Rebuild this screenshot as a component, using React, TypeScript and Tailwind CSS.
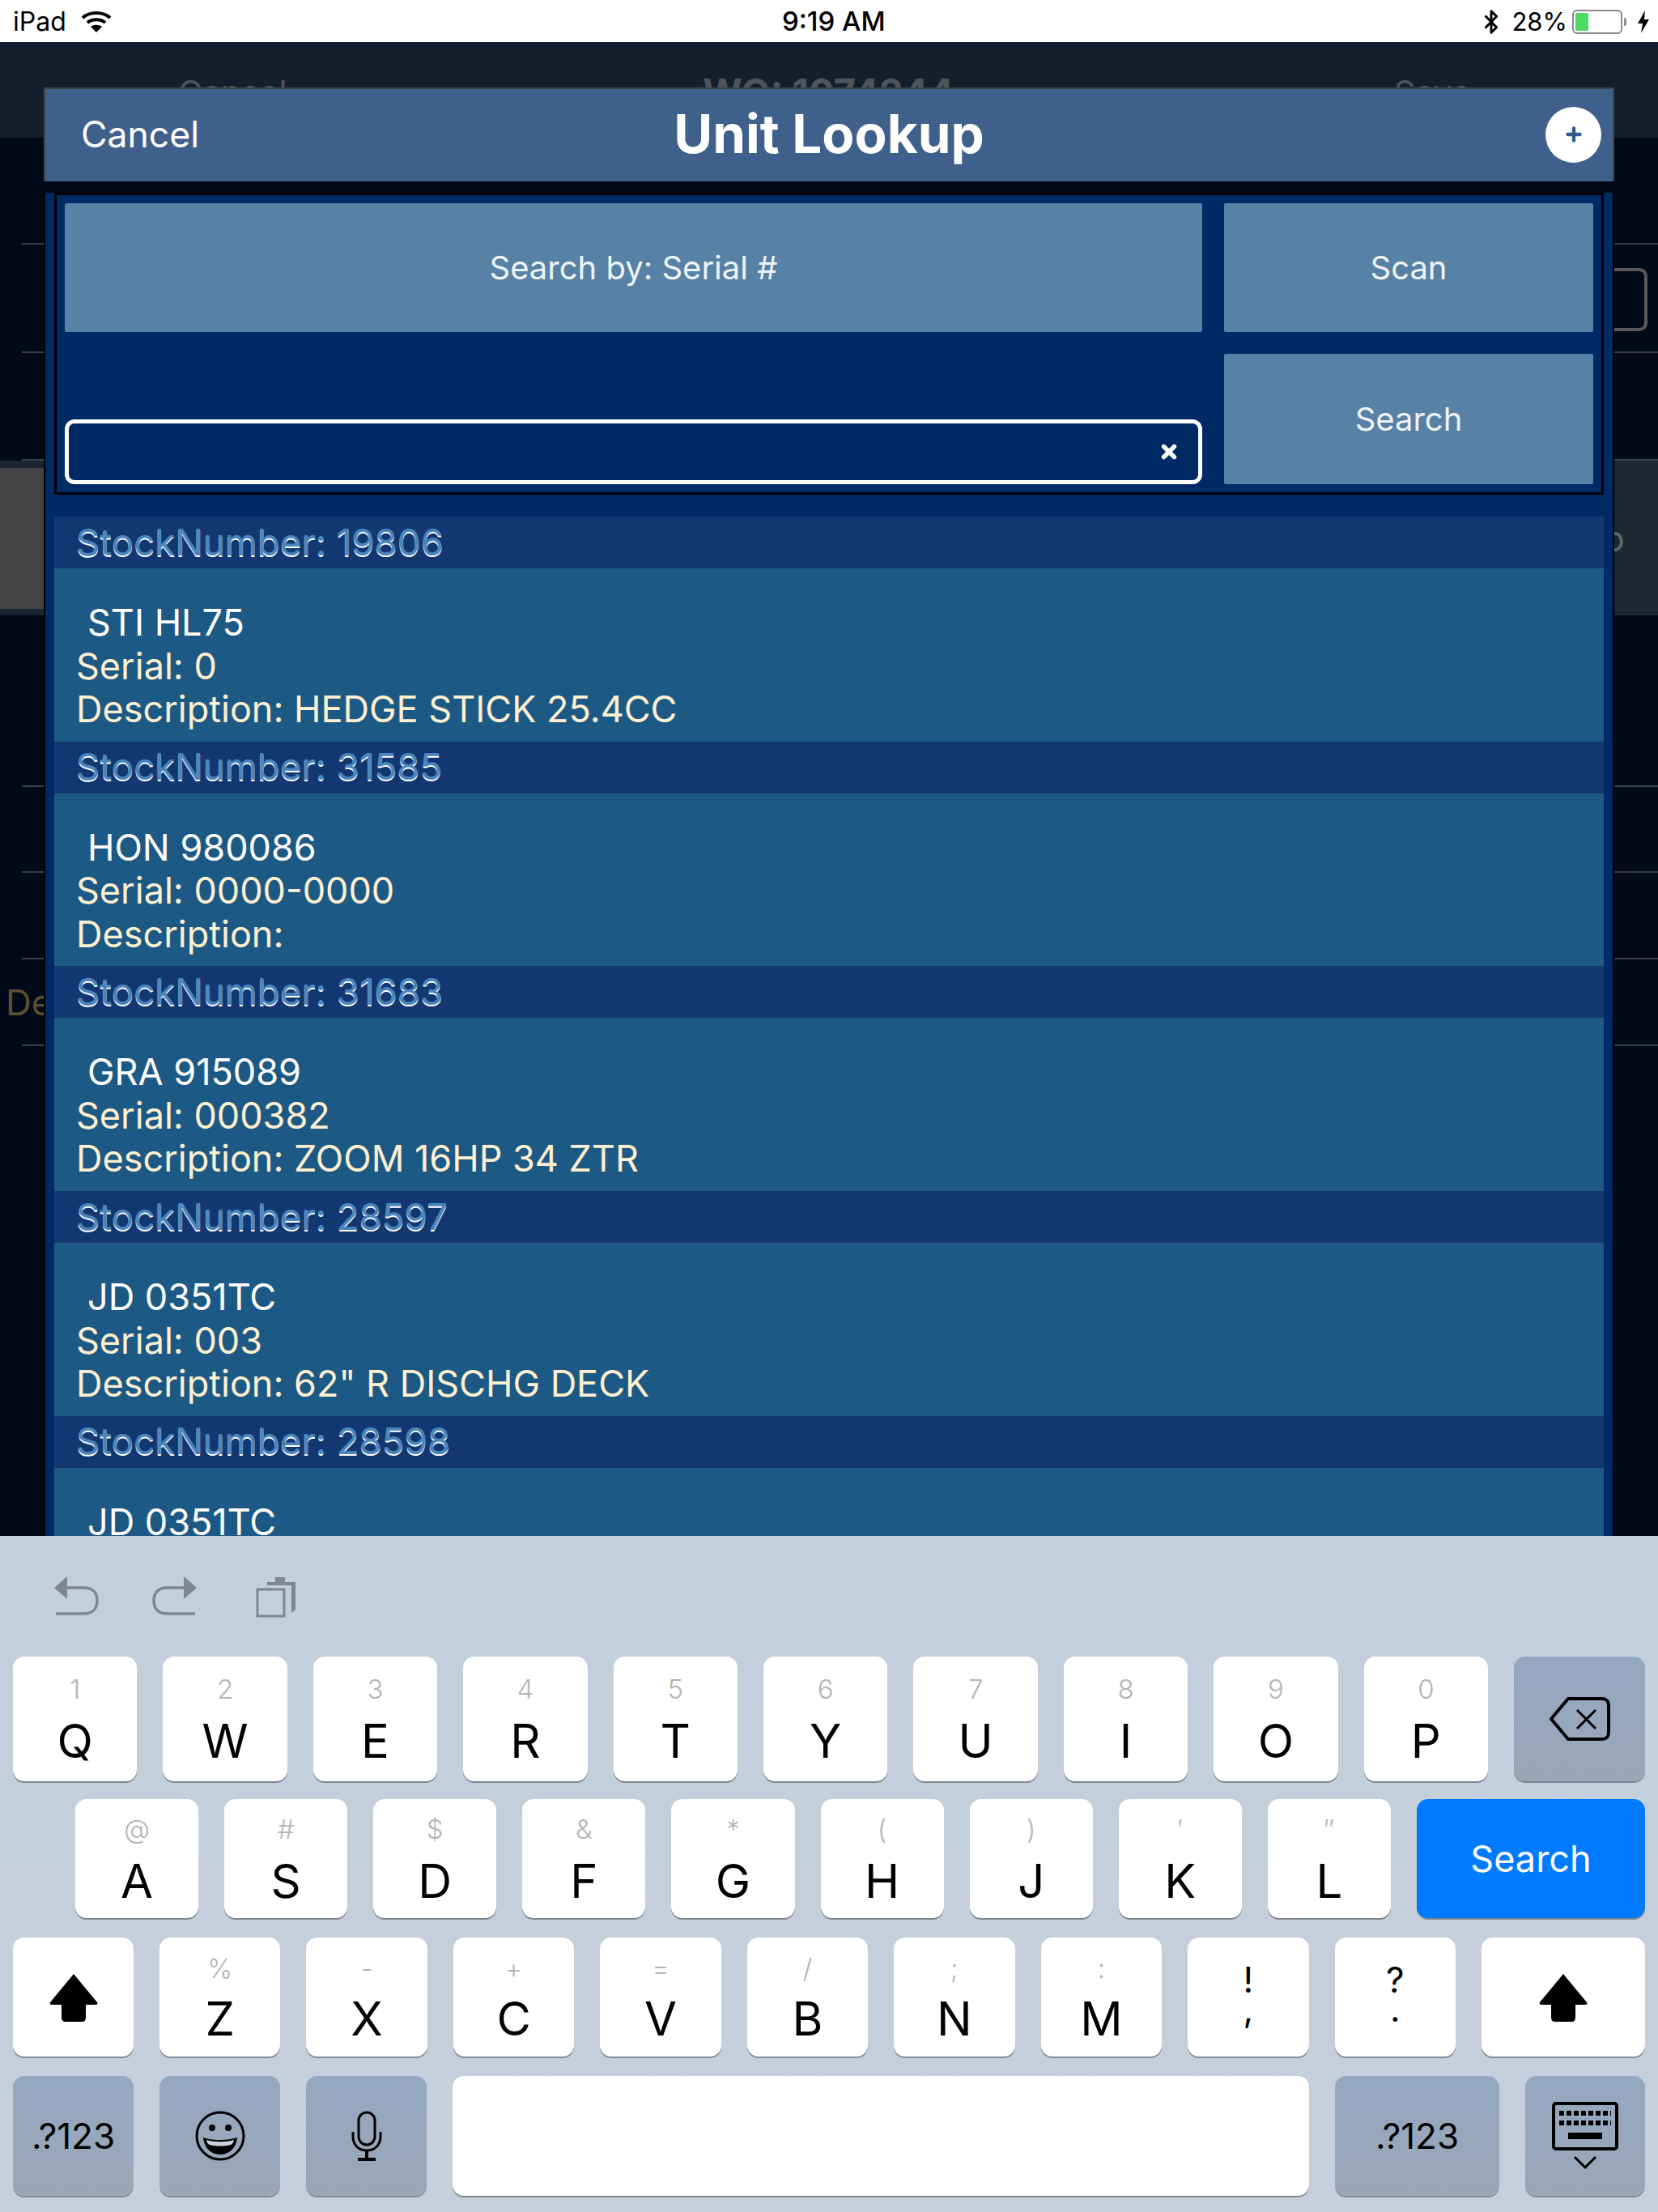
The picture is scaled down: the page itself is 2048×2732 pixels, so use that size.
import { Bluetooth, Plus, X } from "lucide-react";

const rows = [
  { stock: "19806", name: "STI HL75", serial: "0", desc: "HEDGE STICK 25.4CC" },
  { stock: "31585", name: "HON 980086", serial: "0000-0000", desc: "" },
  { stock: "31683", name: "GRA 915089", serial: "000382", desc: "ZOOM 16HP 34 ZTR" },
  { stock: "28597", name: "JD 0351TC", serial: "003", desc: '62" R DISCHG DECK' },
  { stock: "28598", name: "JD 0351TC", serial: "", desc: "" },
];

const Wifi = () => (
  <svg width="38" height="28" viewBox="0 0 38 28" fill="none" stroke="#000" strokeWidth="4">
    <path d="M2 9C11 1 27 1 36 9" />
    <path d="M8 15C14 10 24 10 30 15" />
    <path d="M19 27L12 20C16 17 22 17 26 20Z" fill="#000" stroke="none" />
  </svg>
);

const StatusBar = () => (
  <div className="relative flex h-[52px] items-center justify-between bg-white pl-[16px] pr-[10px] pt-[2px] text-[31px] text-black">
    <div className="flex items-center gap-[18px]">
      <span className="text-[32px]">iPad</span>
      <Wifi />
    </div>
    <span className="absolute left-[966px] text-[33px] font-medium">9:19 AM</span>
    <div className="flex items-center">
      <Bluetooth size={32} strokeWidth={2.2} />
      <span className="ml-[9px]">28%</span>
      <div className="ml-[6px] flex h-[30px] w-[62px] items-center rounded-[6px] border-2 border-[#8a8a8a] p-[2px]">
        <div className="h-full w-[16px] rounded-[2px] bg-[#4cd964]" />
      </div>
      <div className="ml-[2px] h-[10px] w-[3px] rounded-r bg-[#8a8a8a]" />
      <svg width="16" height="28" viewBox="0 0 16 28" fill="#000" className="ml-[13px]">
        <path d="M10 0L1 16H7L5 28L15 11H9Z" />
      </svg>
    </div>
  </div>
);

// the work order page that sits dimmed behind the lookup
const BackPage = () => (
  <div>
    <div className="flex h-[118px] items-start bg-[#141e2d] pl-[220px] pt-[36px] leading-[52px] text-[#4f545c]">
      <span className="w-[648px] text-[41px]">Cancel</span>
      <span className="w-[854px] text-[47px] font-bold">WO: 1074244</span>
      <span className="text-[41px]">Save</span>
    </div>
    <div className="ml-[27px] h-[132px] border-b-2 border-[#3b3f46]" />
    <div className="ml-[27px] flex h-[134px] justify-end border-b-2 border-[#3b3f46] pr-[13px] pt-[29px]">
      <div className="h-[78px] w-[200px] rounded-[10px] border-4 border-[#5a5a5a]" />
    </div>
    <div className="ml-[27px] h-[133px] border-b-2 border-[#3b3f46]" />
    <div className="flex h-[191px]">
      <div className="flex w-1/2 flex-col">
        <div className="h-[9px] bg-[#1a2531]" />
        <div className="flex-1 bg-[#444444]" />
        <div className="h-[8px] bg-[#1a2531]" />
      </div>
      <div className="flex w-1/2 items-center justify-end bg-[#1c2731] pr-[41px] text-[44px] text-[#62666a]">o</div>
    </div>
    <div className="ml-[27px] h-[212px] border-b-2 border-[#3b3f46]" />
    <div className="ml-[27px] h-[106px] border-b-2 border-[#3b3f46]" />
    <div className="ml-[27px] h-[107px] border-b-2 border-[#3b3f46]" />
    <div className="ml-[27px] flex h-[107px] items-center border-b-2 border-[#3b3f46] text-[44px] text-[#5e4f2d]">
      <span className="-ml-[20px]">Description</span>
    </div>
  </div>
);

const Header = () => (
  <div className="relative flex h-[116px] items-center justify-center border-l-2 border-r-2 border-t-2 border-[#444] bg-[#40608c] pb-[2px]">
    <span className="absolute left-[44px] text-[44.5px] text-white">Cancel</span>
    <span className="text-[65.5px] font-bold text-white">Unit Lookup</span>
    <div className="absolute right-[14px] flex h-[69px] w-[69px] items-center justify-center rounded-full bg-white">
      <Plus size={26} strokeWidth={4} className="text-[#2e5a8e]" />
    </div>
  </div>
);

const PanelButton = ({ label, className }: { label: string; className: string }) => (
  <div className={`flex items-center justify-center rounded-[2px] bg-[#5781a5] text-[40px] text-[#eef3f7] ${className}`}>
    {label}
  </div>
);

const SearchPanel = () => (
  <div className="mx-[11px] mt-[14px] flex gap-[27px] border-[3px] border-black px-[10px] py-[10px]">
    <div className="flex w-[1405px] flex-col justify-between">
      <PanelButton label="Search by: Serial #" className="h-[159px]" />
      <div className="flex h-[80px] items-center justify-end rounded-[12px] border-[5px] border-white pr-[23px]">
        <X size={26} strokeWidth={5} className="text-white" />
      </div>
    </div>
    <div className="flex w-[456px] flex-col gap-[27px]">
      <PanelButton label="Scan" className="h-[159px]" />
      <PanelButton label="Search" className="h-[161px]" />
    </div>
  </div>
);

const UnitRow = ({ stock, name, serial, desc }: (typeof rows)[number]) => (
  <div>
    <div className="flex h-[64px] items-center bg-[#133871] pl-[27px] text-[45.7px] text-[#4a85bd] [text-shadow:0_2px_0_#ffffff]">
      StockNumber: {stock}
    </div>
    <div className="h-[213.7px] bg-[#1d5985] pl-[27px] pt-[40px] text-[45px] leading-[53.5px] text-[#fdf0d0]">
      <div className="pl-[14px] text-white">{name}</div>
      {serial && <div>Serial: {serial}</div>}
      {serial && <div>Description: {desc}</div>}
    </div>
  </div>
);

const Modal = () => (
  <div className="absolute left-[54px] top-[108px] h-[1790px] w-[1940px] overflow-hidden">
    <Header />
    <div className="h-full border-x-2 border-black bg-[#002a66]">
      <SearchPanel />
      <div className="mx-[11px] mt-[27px]">
        {rows.map((r) => (
          <UnitRow key={r.stock} {...r} />
        ))}
      </div>
    </div>
  </div>
);

const Undo = () => (
  <svg width="56" height="50" viewBox="0 0 56 50" fill="none" stroke="#7e8790" strokeWidth="3.5">
    <path d="M1 15L17 1V29Z" fill="#7e8790" stroke="none" />
    <path d="M16 15H38C48 15 54 21 54 31C54 41 48 47 38 47H3" />
  </svg>
);

const Redo = () => (
  <svg width="56" height="50" viewBox="0 0 56 50" fill="none" stroke="#7e8790" strokeWidth="3.5">
    <path d="M55 15L39 1V29Z" fill="#7e8790" stroke="none" />
    <path d="M40 15H18C8 15 2 21 2 31C2 41 8 47 18 47H53" />
  </svg>
);

const Paste = () => (
  <svg width="50" height="52" viewBox="0 0 50 52" fill="none" stroke="#7e8790" strokeWidth="3" className="ml-[6px]">
    <path d="M14 8H24V2H36V8H49V42L44 46V12H14Z" fill="#7e8790" stroke="none" />
    <rect x="2" y="17" width="33" height="33" />
  </svg>
);

const Key = ({ main, sub, top, gap }: { main: string; sub: string; top: string; gap: string }) => (
  <div className={`flex flex-1 flex-col items-center rounded-[14px] bg-white shadow-[0_2px_0_#7f8792] ${top}`}>
    <span className="h-[40px] text-[33px] font-light leading-[40px] text-[#b4b4b4]">{sub}</span>
    <span className={`text-[58px] font-normal leading-[64px] text-black ${gap}`}>{main}</span>
  </div>
);

const PunctKey = ({ a, b }: { a: string; b: string }) => (
  <div className="flex flex-1 flex-col items-center rounded-[14px] bg-white pt-[34px] text-[44px] leading-[36px] text-black shadow-[0_2px_0_#7f8792]">
    <span>{a}</span>
    <span>{b}</span>
  </div>
);

const ShiftKey = ({ className }: { className: string }) => (
  <div className={`flex items-center justify-center rounded-[14px] bg-white shadow-[0_2px_0_#7f8792] ${className}`}>
    <svg width="60" height="60" viewBox="0 0 60 60" fill="#000">
      <path d="M30 1L59 36C60 38 59 39 57 39H45V55C45 58 43 60 41 60H19C17 60 15 58 15 55V39H3C1 39 0 38 1 36Z" />
    </svg>
  </div>
);

const GrayKey = ({ className, children }: { className: string; children: React.ReactNode }) => (
  <div className={`flex items-center justify-center rounded-[14px] bg-linear-to-b from-[#94a8c1] to-[#9aa6b6] shadow-[0_2px_0_#7f8792] ${className}`}>
    {children}
  </div>
);

const Emoji = () => (
  <svg width="62" height="62" viewBox="0 0 62 62" fill="none" stroke="#000" strokeWidth="3">
    <circle cx="31" cy="31" r="29" />
    <circle cx="21" cy="21" r="4" fill="#000" stroke="none" />
    <circle cx="41" cy="21" r="4" fill="#000" stroke="none" />
    <path d="M10 33C22 37 40 37 52 33C51 46 42 54 31 54C20 54 11 46 10 33Z" fill="#000" stroke="none" />
    <path d="M14 36C24 39 38 39 48 36C47 40 46 41 44 42C36 44 26 44 18 42C16 41 15 40 14 36Z" fill="#c8d2de" stroke="none" />
  </svg>
);

const MicIcon = () => (
  <svg width="38" height="62" viewBox="0 0 38 62" fill="none" stroke="#000" strokeWidth="3">
    <rect x="9" y="2" width="20" height="40" rx="10" />
    <path d="M2 26V32C2 42 9 49 19 49C29 49 36 42 36 32V26" />
    <path d="M19 49V59" strokeWidth="4" />
    <path d="M8 60H30" strokeWidth="4" />
  </svg>
);

const Backspace = () => (
  <svg width="76" height="54" viewBox="0 0 76 54" fill="none" stroke="#000" strokeWidth="4">
    <path d="M24 2H66C71 2 74 5 74 10V44C74 49 71 52 66 52H24L3 27Z" strokeLinejoin="round" />
    <path d="M35 16L58 39M58 16L35 39" strokeWidth="3" />
  </svg>
);

const KeyboardHide = () => (
  <div className="flex flex-col items-center gap-[6px]">
    <svg width="82" height="60" viewBox="0 0 82 60" fill="none" stroke="#000" strokeWidth="4">
      <rect x="2" y="2" width="78" height="56" rx="3" />
      <path d="M9 14H73M9 26H73" strokeWidth="6" strokeDasharray="6 3" />
      <path d="M20 42H62" strokeWidth="8" />
    </svg>
    <svg width="30" height="18" viewBox="0 0 30 18" fill="none" stroke="#000" strokeWidth="3">
      <path d="M2 2L15 15L28 2" />
    </svg>
  </div>
);

const Keyboard = () => (
  <div className="absolute bottom-0 left-0 right-0 flex h-[835px] flex-col bg-linear-to-b from-[#c2cfdc] to-[#c6cfdb] px-[16px]">
    <div className="flex h-[149px] items-start gap-[66px] pl-[50px] pt-[49px]">
      <Undo />
      <Redo />
      <Paste />
    </div>
    <div className="flex h-[154px] gap-[32px]">
      <Key main="Q" sub="1" top="pt-[20px]" gap="mt-[12px]" />
      <Key main="W" sub="2" top="pt-[20px]" gap="mt-[12px]" />
      <Key main="E" sub="3" top="pt-[20px]" gap="mt-[12px]" />
      <Key main="R" sub="4" top="pt-[20px]" gap="mt-[12px]" />
      <Key main="T" sub="5" top="pt-[20px]" gap="mt-[12px]" />
      <Key main="Y" sub="6" top="pt-[20px]" gap="mt-[12px]" />
      <Key main="U" sub="7" top="pt-[20px]" gap="mt-[12px]" />
      <Key main="I" sub="8" top="pt-[20px]" gap="mt-[12px]" />
      <Key main="O" sub="9" top="pt-[20px]" gap="mt-[12px]" />
      <Key main="P" sub="0" top="pt-[20px]" gap="mt-[12px]" />
      <GrayKey className="w-[162px]">
        <Backspace />
      </GrayKey>
    </div>
    <div className="mt-[22px] flex h-[147px] gap-[32px] pl-[77px]">
      <Key main="A" sub="@" top="pt-[17px]" gap="mt-[12px]" />
      <Key main="S" sub="#" top="pt-[17px]" gap="mt-[12px]" />
      <Key main="D" sub="$" top="pt-[17px]" gap="mt-[12px]" />
      <Key main="F" sub="&" top="pt-[17px]" gap="mt-[12px]" />
      <Key main="G" sub="*" top="pt-[17px]" gap="mt-[12px]" />
      <Key main="H" sub="(" top="pt-[17px]" gap="mt-[12px]" />
      <Key main="J" sub=")" top="pt-[17px]" gap="mt-[12px]" />
      <Key main="K" sub="′" top="pt-[17px]" gap="mt-[12px]" />
      <Key main="L" sub="″" top="pt-[17px]" gap="mt-[12px]" />
      <div className="flex w-[282px] items-center justify-center rounded-[14px] bg-[#007aff] text-[45px] text-white shadow-[0_2px_0_#7f8792]">
        Search
      </div>
    </div>
    <div className="mt-[24px] flex h-[147px] gap-[32px]">
      <ShiftKey className="w-[149px]" />
      <Key main="Z" sub="%" top="pt-[18px]" gap="mt-[10px]" />
      <Key main="X" sub="-" top="pt-[18px]" gap="mt-[10px]" />
      <Key main="C" sub="+" top="pt-[18px]" gap="mt-[10px]" />
      <Key main="V" sub="=" top="pt-[18px]" gap="mt-[10px]" />
      <Key main="B" sub="/" top="pt-[18px]" gap="mt-[10px]" />
      <Key main="N" sub=";" top="pt-[18px]" gap="mt-[10px]" />
      <Key main="M" sub=":" top="pt-[18px]" gap="mt-[10px]" />
      <PunctKey a="!" b="," />
      <PunctKey a="?" b="." />
      <ShiftKey className="w-[202px]" />
    </div>
    <div className="mt-[24px] flex h-[148px] gap-[32px]">
      <GrayKey className="w-[149px] text-[44px] text-black">.?123</GrayKey>
      <GrayKey className="w-[149px]">
        <Emoji />
      </GrayKey>
      <GrayKey className="w-[149px]">
        <MicIcon />
      </GrayKey>
      <div className="flex-1 rounded-[14px] bg-white shadow-[0_2px_0_#7f8792]" />
      <GrayKey className="w-[203px] text-[44px] text-black">.?123</GrayKey>
      <GrayKey className="w-[148px]">
        <KeyboardHide />
      </GrayKey>
    </div>
  </div>
);

export default function App() {
  return (
    <div className="relative h-[2732px] w-[2048px] overflow-hidden bg-[#010a18] font-['Inter',sans-serif]">
      <StatusBar />
      <BackPage />
      <Modal />
      <Keyboard />
    </div>
  );
}
